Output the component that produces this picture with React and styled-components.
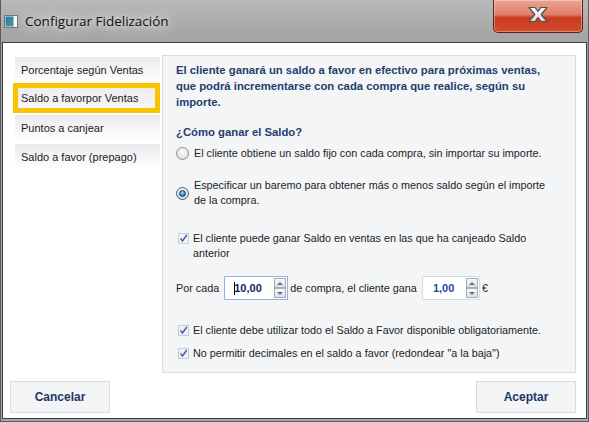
import styled, { createGlobalStyle, css } from 'styled-components';

const GlobalStyle = createGlobalStyle`
  body {
    margin: 0;
    overflow: hidden;
    font-family: 'Liberation Sans', Arial, sans-serif;
  }
`;

const Window = styled.div`
  width: 589px;
  height: 422px;
  box-sizing: border-box;
  display: flex;
  flex-direction: column;
  padding: 0 1px 2px 1px;
  border: 1px solid #5c5c5c;
  border-top: none;
  background: linear-gradient(180deg, #b9b9b9 0%, #a6a6a6 8%, #a9a9a9 100%);
`;

const TitleBar = styled.div`
  height: 42px;
  flex: none;
  display: flex;
  align-items: flex-start;
  justify-content: space-between;
  margin: 0 -1px;
`;

const TitleGroup = styled.div`
  display: flex;
  align-items: center;
  gap: 7px;
  padding: 12px 0 0 3px;
`;

const TitleText = styled.span`
  font-family: 'Open Sans', 'Noto Sans', sans-serif;
  font-size: 13.5px;
  color: #111;
  text-shadow: 0 0 6px #e4e4e4, 0 0 12px #e4e4e4, 0 0 18px #dadada;
`;

const CloseButton = styled.div`
  width: 90px;
  height: 33px;
  margin-right: 5px;
  box-sizing: border-box;
  border: 1px solid #5a2218;
  border-top: none;
  border-radius: 0 0 5px 5px;
  background: linear-gradient(180deg, #eba594 0%, #df7f6b 45%, #c93c22 55%, #d2492b 100%);
  box-shadow: inset 0 0 0 1px rgba(255, 255, 255, 0.35);
  display: flex;
  align-items: center;
  justify-content: center;
  padding-bottom: 3px;
`;

const Client = styled.div`
  flex: 1;
  display: flex;
  flex-direction: column;
  background: #fff;
  border: 1px solid #3e3e3e;
`;

const Main = styled.div`
  display: flex;
  align-items: flex-start;
  padding: 12px 9px 0 10px;
`;

const Nav = styled.div`
  width: 147px;
  margin-right: 2px;
  padding-top: 2px;
  display: flex;
  flex-direction: column;
`;

const NavItem = styled.div`
  height: 26px;
  margin: 0 0 3px 2px;
  box-sizing: border-box;
  padding-left: 6px;
  display: flex;
  align-items: center;
  font-size: 11px;
  color: #1b1b1b;
  background: linear-gradient(180deg, #e9eaed 0%, #f6f6f7 55%, #ffffff 100%);
  white-space: nowrap;
  ${(p) =>
    p.$active &&
    css`
      height: 30px;
      margin: -3px 0 2px 0;
      padding-left: 3px;
      border: 5px solid #f9c300;
      background: linear-gradient(180deg, #ecedf0 0%, #f6f6f8 100%);
    `}
`;

const Panel = styled.div`
  width: 414px;
  height: 318px;
  box-sizing: border-box;
  background: #f4f5f7;
  border: 1px solid #d9dbdf;
  padding: 6px 13px 0 13px;
  display: flex;
  flex-direction: column;
`;

const Heading = styled.div`
  font-size: 11.3px;
  font-weight: 700;
  line-height: 16px;
  color: #1f3e6e;
  margin-top: ${(p) => p.$mt || 0}px;
  white-space: nowrap;
`;

const Option = styled.div`
  display: flex;
  align-items: ${(p) => (p.$top ? 'flex-start' : 'center')};
  gap: ${(p) => (p.$check ? 4 : 5)}px;
  margin-top: ${(p) => p.$mt}px;
  font-size: 10.8px;
  line-height: 15px;
  color: #1c1c1c;
  white-space: nowrap;
`;

const Radio = styled.span`
  position: relative;
  flex: none;
  width: 13px;
  height: 13px;
  box-sizing: border-box;
  border-radius: 50%;
  border: 1px solid #8e8e8e;
  background: radial-gradient(circle at 50% 35%, #fdfdfd 0%, #e8e8e8 55%, #cdcdcd 100%);
  ${(p) =>
    p.$checked &&
    css`
      border-color: #4d5a6a;
      &::after {
        content: '';
        position: absolute;
        left: 2px;
        top: 2px;
        width: 7px;
        height: 7px;
        box-sizing: border-box;
        border-radius: 50%;
        border: 1px solid #153a72;
        background: radial-gradient(circle at 45% 35%, #a8e6ff 0%, #2f8ddc 55%, #0e4592 100%);
      }
    `}
`;

const CheckBox = styled.span`
  flex: none;
  width: 11px;
  height: 11px;
  margin: 2px 0 0 2px;
  display: flex;
`;

const SpinRow = styled.div`
  display: flex;
  align-items: center;
  margin-top: 15px;
  font-size: 10.8px;
  color: #1c1c1c;
  white-space: nowrap;
`;

const SpinBox = styled.div`
  width: ${(p) => p.$w}px;
  height: 24px;
  box-sizing: border-box;
  margin: 0 ${(p) => p.$mr}px 0 ${(p) => p.$ml}px;
  border: 1px solid ${(p) => (p.$focused ? '#93b5da' : '#d6dade')};
  background: #fff;
  display: flex;
  align-items: center;
  padding: 0 1px 0 ${(p) => (p.$focused ? 9 : 10)}px;
`;

const Caret = styled.span`
  width: 1px;
  height: 13px;
  background: #000;
  margin-right: -1px;
`;

const SpinValue = styled.span`
  flex: 1;
  font-size: 11px;
  font-weight: 700;
  color: ${(p) => (p.$focused ? '#0e1f5c' : '#1d48a8')};
`;

const SpinButtons = styled.div`
  display: flex;
  flex-direction: column;
`;

const SpinBtn = styled.span`
  width: 12px;
  height: 10px;
  box-sizing: border-box;
  border: 1px solid #a9adb3;
  background: linear-gradient(180deg, #fbfbfb, #dcdee2);
  display: flex;
  align-items: center;
  justify-content: center;
  &::after {
    content: '';
    border-left: 3px solid transparent;
    border-right: 3px solid transparent;
    ${(p) =>
      p.$down
        ? 'border-top: 3px solid #56799f;'
        : 'border-bottom: 3px solid #56799f;'}
  }
`;

const Footer = styled.div`
  display: flex;
  justify-content: space-between;
  padding: 8px 10px 0 7px;
`;

const Button = styled.div`
  width: 100px;
  height: 32px;
  box-sizing: border-box;
  border: 1px solid #d8dade;
  background: #f3f4f6;
  display: flex;
  align-items: center;
  justify-content: center;
  font-size: 12px;
  font-weight: 700;
  color: #1d3766;
`;

const WindowIcon = () => (
  <svg width="14" height="13" viewBox="0 0 14 13">
    <defs>
      <linearGradient id="wi" x1="0" y1="0" x2="1" y2="1">
        <stop offset="0" stopColor="#2f6fb6" />
        <stop offset="1" stopColor="#4aa38a" />
      </linearGradient>
    </defs>
    <rect x="0.5" y="0.5" width="13" height="12" fill="#e9eef3" stroke="#6b7884" />
    <rect x="1.5" y="1.5" width="8" height="10" fill="url(#wi)" />
    <rect x="10.5" y="1.5" width="2" height="10" fill="#ffffff" />
  </svg>
);

const CloseIcon = () => (
  <svg width="22" height="17" viewBox="0 0 22 17">
    <defs>
      <linearGradient id="cx" x1="0" y1="0" x2="0" y2="1">
        <stop offset="0" stopColor="#ffffff" />
        <stop offset="1" stopColor="#d8d8d8" />
      </linearGradient>
    </defs>
    <path
      d="M2 1.5 H8 L11 5.5 L14 1.5 H20 L14.2 8.5 L20 15.5 H14 L11 11.5 L8 15.5 H2 L7.8 8.5 Z"
      fill="url(#cx)"
      stroke="#4f4f4f"
      strokeWidth="1.2"
      strokeLinejoin="round"
    />
  </svg>
);

const CheckIcon = () => (
  <svg width="11" height="11" viewBox="0 0 11 11">
    <rect x="0.5" y="0.5" width="10" height="10" fill="#eef1f6" stroke="#c9ccd2" />
    <path d="M2.5 5.5 L4.5 8 L8.8 2" fill="none" stroke="#4a5fae" strokeWidth="1.5" />
  </svg>
);

const Spin = ({ value, width, focused, ml, mr }) => (
  <SpinBox $w={width} $focused={focused} $ml={ml} $mr={mr}>
    {focused && <Caret />}
    <SpinValue $focused={focused}>{value}</SpinValue>
    <SpinButtons>
      <SpinBtn />
      <SpinBtn $down />
    </SpinButtons>
  </SpinBox>
);

const navItems = [
  'Porcentaje según Ventas',
  'Saldo a favorpor Ventas',
  'Puntos a canjear',
  'Saldo a favor (prepago)',
];

export default function App() {
  return (
    <>
      <GlobalStyle />
      <Window>
        <TitleBar>
          <TitleGroup>
            <WindowIcon />
            <TitleText>Configurar Fidelización</TitleText>
          </TitleGroup>
          <CloseButton>
            <CloseIcon />
          </CloseButton>
        </TitleBar>
        <Client>
          <Main>
            <Nav>
              {navItems.map((label, i) => (
                <NavItem key={label} $active={i === 1}>
                  {label}
                </NavItem>
              ))}
            </Nav>
            <Panel>
              <Heading>
                El cliente ganará un saldo a favor en efectivo para próximas ventas,
                <br />
                que podrá incrementarse con cada compra que realice, según su
                <br />
                importe.
              </Heading>
              <Heading $mt={14}>¿Cómo ganar el Saldo?</Heading>
              <Option $mt={6}>
                <Radio />
                <span>El cliente obtiene un saldo fijo con cada compra, sin importar su importe.</span>
              </Option>
              <Option $mt={17}>
                <Radio $checked />
                <span>
                  Especificar un baremo para obtener más o menos saldo según el importe
                  <br />
                  de la compra.
                </span>
              </Option>
              <Option $mt={23} $top $check>
                <CheckBox>
                  <CheckIcon />
                </CheckBox>
                <span>
                  El cliente puede ganar Saldo en ventas en las que ha canjeado Saldo
                  <br />
                  anterior
                </span>
              </Option>
              <SpinRow>
                <span>Por cada</span>
                <Spin value="10,00" width={64} focused ml={5} mr={2} />
                <span>de compra, el cliente gana</span>
                <Spin value="1,00" width={58} ml={5} mr={2} />
                <span>€</span>
              </SpinRow>
              <Option $mt={23} $top $check>
                <CheckBox>
                  <CheckIcon />
                </CheckBox>
                <span>El cliente debe utilizar todo el Saldo a Favor disponible obligatoriamente.</span>
              </Option>
              <Option $mt={8} $top $check>
                <CheckBox>
                  <CheckIcon />
                </CheckBox>
                <span>No permitir decimales en el saldo a favor (redondear "a la baja")</span>
              </Option>
            </Panel>
          </Main>
          <Footer>
            <Button>Cancelar</Button>
            <Button>Aceptar</Button>
          </Footer>
        </Client>
      </Window>
    </>
  );
}
